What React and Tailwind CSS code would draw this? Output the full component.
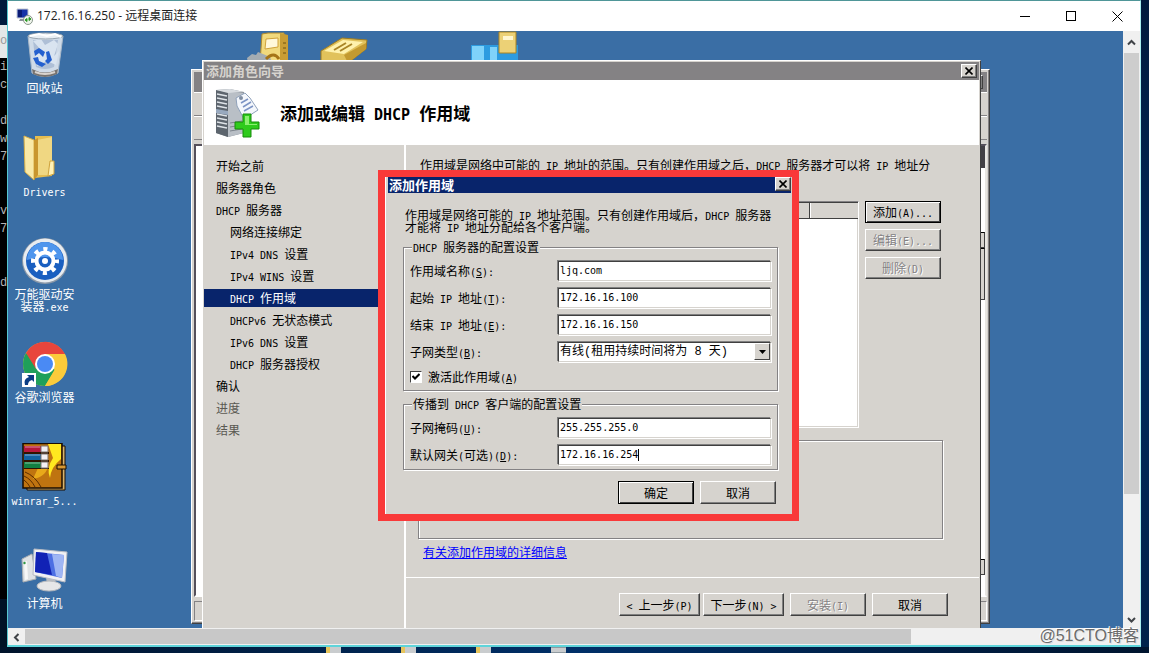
import React from 'react';

const NAV_ITEMS = [
  { label: '开始之前' },
  { label: '服务器角色' },
  { label: 'DHCP 服务器' },
  { label: '网络连接绑定', child: true },
  { label: 'IPv4 DNS 设置', child: true },
  { label: 'IPv4 WINS 设置', child: true },
  { label: 'DHCP 作用域', child: true, active: true },
  { label: 'DHCPv6 无状态模式', child: true },
  { label: 'IPv6 DNS 设置', child: true },
  { label: 'DHCP 服务器授权', child: true },
  { label: '确认' },
  { label: '进度', disabled: true },
  { label: '结果', disabled: true },
];

const TERMINAL_LINES = ['in', 'c:', '', 'dy', 'w.', '79', '', '', 'v.', '7.', '', '', 'dy'];

// Latin runs use a narrower monospace size so that two letters match one CJK cell.
// An "&" marks the access key, which is underlined.
const Txt = ({ text, latin = 'text-[10px]' }) => (
  <span className="whitespace-pre-wrap">
    {text.split(/([\x20-\x7e]+)/).map((part, i) => {
      if (!/^[\x20-\x7e]/.test(part)) return part;
      const at = part.indexOf('&');
      return (
        <span key={i} className={`font-['DejaVu_Sans_Mono',monospace] leading-[0] ${latin}`}>
          {at < 0 ? part : (
            <>
              {part.slice(0, at)}
              <u>{part[at + 1]}</u>
              {part.slice(at + 2)}
            </>
          )}
        </span>
      );
    })}
  </span>
);

const Button = ({ text, primary, disabled, className = 'w-[76px] h-[23px]' }) => (
  <button
    type="button"
    disabled={disabled}
    className={`${className} flex shrink-0 items-center justify-center border bg-[#d6d3ce] leading-3 ${
      primary
        ? 'border-black shadow-[inset_1px_1px_0_white,inset_-1px_-1px_0_#404040]'
        : 'border-t-white border-l-white border-r-[#404040] border-b-[#404040] shadow-[inset_-1px_-1px_0_#808080]'
    } ${disabled ? 'text-[#848284] [text-shadow:1px_1px_0_white]' : 'text-black'}`}
  >
    <Txt text={text} />
  </button>
);

const CloseButton = () => (
  <button
    type="button"
    aria-label="关闭"
    className="flex h-[14px] w-4 items-center justify-center border border-t-white border-l-white border-r-[#404040] border-b-[#404040] bg-[#d6d3ce] shadow-[inset_-1px_-1px_0_#808080]"
  >
    <svg width="8" height="8" viewBox="0 0 8 8" stroke="black" strokeWidth="1.6">
      <path d="M0.5 0.5L7.5 7.5M7.5 0.5L0.5 7.5" />
    </svg>
  </button>
);

const FIELD =
  'h-5 w-full border border-t-[#404040] border-l-[#404040] border-r-[#d6d3ce] border-b-[#d6d3ce] bg-white shadow-[-1px_-1px_0_#808080,1px_1px_0_white] outline-none';

const Row = ({ id, label, children }) => (
  <div className="flex h-5 items-center">
    <label htmlFor={id} className="w-[148px] shrink-0"><Txt text={label} /></label>
    <div className="relative flex-1">{children}</div>
  </div>
);

const TextField = ({ id, label, value, caret }) => (
  <Row id={id} label={label}>
    <input
      id={id}
      defaultValue={value}
      className={`${FIELD} block px-px pb-0.5 font-['DejaVu_Sans_Mono',monospace] text-[10px] leading-3`}
    />
    {caret && <span className="absolute top-1 left-20 h-3 w-px bg-black" />}
  </Row>
);

const Group = ({ legend, className, children }) => (
  <fieldset
    className={`${className} flex flex-col border border-[#848284] px-1.5 pt-2 shadow-[1px_1px_0_white,inset_1px_1px_0_white]`}
  >
    <legend className="ml-0.5 bg-[#d6d3ce] px-px leading-3"><Txt text={legend} /></legend>
    {children}
  </fieldset>
);

const RecycleBin = () => (
  <svg width="48" height="48" viewBox="0 0 48 48">
    <path d="M7 5L11 42Q24 49 37 42L42 5Z" fill="#cfdbe8" stroke="#a9b8c8" />
    <path d="M12 9L15 36Q24 40 33 36L37 9Z" fill="#aebfd6" />
    <path d="M12 10L20 8 24 14 33 9 37 13 33 25 38 20 35 34 26 30 16 35 13 22 20 19Z" fill="#d9e4f0" />
    <path d="M11 38Q24 45 37 38L36 43Q24 49 12 43Z" fill="#77736f" />
    <path d="M14 41Q24 45 34 41" stroke="#d9d4cf" strokeWidth="2" fill="none" />
    <ellipse cx="24.500" cy="5" rx="17.500" ry="3" fill="#e9eff4" stroke="#9aa6b0" />
    <path d="M9 5L18 3 26 5 34 3 40 6" stroke="#fff" strokeWidth="2" fill="none" />
    <g fill="#2460cf">
      <path d="M13 20L18 17 24 21 22 26 18 22 14 25Z" />
      <path d="M25 21L28 20 31 29 27 33 24 30 26 28Z" />
      <path d="M12 27L17 26 18 30 25 33 21 36 15 33Z" />
    </g>
  </svg>
);

const Folder = () => (
  <svg width="48" height="48" viewBox="0 0 48 48">
    <path d="M14 2H31V42L14 44Z" fill="#e5bd50" />
    <path d="M16 6L31 3V41L16 41Z" fill="#f0d782" />
    <path d="M3 2L13 6V46L4 38Z" fill="#f9e9a7" stroke="#d9b048" />
    <path d="M13 6L17 4V41L13 46Z" fill="#c9962e" />
    <path d="M29 27H33V40L27 42Z" fill="#fff1b6" stroke="#cfa23b" />
  </svg>
);

const GearDisc = () => (
  <svg width="48" height="48" viewBox="0 0 48 48">
    <circle cx="24" cy="24" r="23" fill="#8d99a8" />
    <circle cx="24" cy="23.500" r="22" fill="#e8ecf0" />
    <circle cx="24" cy="24" r="19" fill="#1a5fc0" />
    <path d="M6 23A18 18 0 0 1 42 23Q24 17 6 23Z" fill="#4f96ed" />
    <circle cx="24" cy="24" r="8.500" fill="none" stroke="white" strokeWidth="4" />
    <circle cx="24" cy="24" r="12" fill="none" stroke="white" strokeWidth="4" strokeDasharray="4.2 5.225" strokeDashoffset="2.1" />
    <circle cx="24" cy="24" r="3" fill="white" />
  </svg>
);

const Chrome = () => (
  <svg width="48" height="48" viewBox="0 0 48 48">
    <circle cx="24" cy="24" r="22" fill="#fbcb3b" />
    <path d="M24 24L5 13A22 22 0 0 0 24 46L34 30Z" fill="#1fa05a" />
    <path d="M24 14H44A22 22 0 0 0 5 13L15 29Z" fill="#e8453c" />
    <path d="M34 29L24 46A22 22 0 0 0 44 14H25Z" fill="#fbcb3b" />
    <circle cx="24" cy="24" r="10" fill="white" />
    <circle cx="24" cy="24" r="8" fill="#4a8af4" />
    <path d="M1 33H15V47H1Z" fill="white" />
    <path d="M4 45Q2 39 8 37L6 35H13V42L11 40Q7 41 7 45Z" fill="#0a3d84" />
  </svg>
);

const WinRar = () => (
  <svg width="48" height="48" viewBox="0 0 48 48">
    <path d="M5 3H44V47H6Z" fill="#d8b46c" stroke="#1a0c00" />
    <path d="M2 0.500H41V45H2Z" fill="#bf7410" stroke="#1a0c00" strokeWidth="1.500" />
    <path d="M27 1H40V16Q30 24 29 35Q25 25 32 15Z" fill="#ffe81f" />
    <path d="M28 20Q22 24 17 25L12 36Q26 34 28 20Z" fill="#e8a91a" />
    <path d="M3 33Q10 36 14 44M3 37Q7 40 9 44M4 29Q14 33 20 44" stroke="#5a2c00" fill="none" />
    <path d="M3 3H20V9H3Z" fill="#b5173c" />
    <path d="M3 11H20V17H3Z" fill="#1261a0" />
    <path d="M3 19H20V25H3Z" fill="#128042" />
    <path d="M3 9H28V11H3ZM3 17H28V19H3ZM3 25H28V26H3Z" fill="#301400" />
    <path d="M20 3H27V9H20ZM20 11H27V17H20ZM20 19H27V25H20Z" fill="#f4f0f4" stroke="#7d756e" />
    <path d="M4 4H19M4 12H19M4 20H19" stroke="#ffffff" strokeOpacity="0.500" />
    <path d="M36 22H45V26H36Z" fill="#d89832" stroke="#1a0c00" />
  </svg>
);

const Computer = () => (
  <svg width="48" height="48" viewBox="0 0 48 48">
    <path d="M1 13L11 8 15 33 2 36Z" fill="#dfe2e4" stroke="#a9aeb3" />
    <path d="M3 16L6 15 7 33 4 34Z" fill="#f7f7f7" />
    <circle cx="3.500" cy="17" r="1.200" fill="#2f9744" />
    <path d="M25 31L35 32 34 39H26Z" fill="#b9bec4" />
    <ellipse cx="28" cy="40" rx="12" ry="5" fill="#e6e7e8" stroke="#b5b8bc" />
    <path d="M13 3L46 6 44 36 12 29Z" fill="#f1f1f3" stroke="#b8bcc4" />
    <path d="M15 6L43 9 41 32 14 26Z" fill="#4d6fe3" />
    <path d="M15 6L26 7 31 29 14 26Z" fill="#1122b5" />
    <path d="M31 8L43 9 41 32 35 30Z" fill="#9fb6f4" />
  </svg>
);

const DESKTOP_ICONS = [
  { label: '回收站', icon: <RecycleBin /> },
  { label: 'Drivers', icon: <Folder /> },
  { label: '万能驱动安装器.exe', icon: <GearDisc /> },
  { label: '谷歌浏览器', icon: <Chrome /> },
  { label: 'winrar_5...', icon: <WinRar /> },
  { label: '计算机', icon: <Computer /> },
];

const ServerIcon = () => (
  <svg width="46" height="50" viewBox="0 0 46 50">
    <path d="M2 2L16 1 30 4V45L14 49 2 45Z" fill="#8c949c" />
    <path d="M2 2L14 4V49L2 45Z" fill="#5d656e" />
    <path d="M14 4L29 5V45L14 49Z" fill="#b9bfc6" />
    <path d="M2 2L16 1 30 4 14 5Z" fill="#d8dce0" />
    <path d="M3 6L13 8M3 10L13 12M3 14L13 16M3 18L13 20M3 26L13 28M3 30L13 32M3 34L13 36M3 38L13 40" stroke="#dfe4e9" strokeWidth="1.500" />
    <path d="M2 21L14 23V27L2 25Z" fill="#98a9bf" />
    <path d="M16 35L28 33M16 39L28 37M16 43L28 41" stroke="#7e858d" />
    <path d="M22 10L31 5 36 10 44 22 30 31 23 18Z" fill="#f4f7fc" stroke="#8fa1ba" />
    <path d="M27 15L34 11M29 19L37 14M30 23L39 18" stroke="#7c93c4" strokeWidth="1.500" />
    <circle cx="27" cy="10" r="2" fill="#7f8da1" />
    <path d="M29 26H37V34H45V41H37V49H29V41H21V34H29Z" fill="#2fcb1c" stroke="#168b0b" />
    <path d="M31 28H35V36H43V37H31Z" fill="#8bf070" />
  </svg>
);

const BackWindow = () => (
  <div className="absolute top-[38px] bottom-1 left-[183px] flex w-[799px] flex-col border border-t-white border-l-white border-r-[#404040] border-b-[#404040] bg-[#d6d3ce] p-0.5 shadow-[inset_-1px_-1px_0_#848284]">
    <div className="flex h-5 shrink-0 items-center justify-end bg-[#848284] pr-1"><CloseButton /></div>
    <div className="h-6 shrink-0 border-y border-t-white border-b-[#848284]" />
    <div className="h-6 shrink-0 border-y border-t-white border-b-[#848284]" />
    <div className="mt-1 flex flex-1 flex-col items-end border-2 border-[#55505a] border-r-[#e8e6e2] border-b-white bg-white">
      <div className="h-[22px] w-4 bg-[#424045]" />
      <div className="mt-16 h-4 w-4 border border-r-[#404040] border-b-[#404040] bg-[#d6d3ce]" />
      <div className="h-[52px] w-4 border border-r-[#404040] border-b-[#404040] bg-[#d6d3ce]" />
      <div className="flex-1" />
      <div className="mb-5 h-4 w-4 border border-r-[#404040] border-b-[#404040] bg-[#d6d3ce]" />
    </div>
    <div className="mt-1 h-5 shrink-0 border border-t-[#848284] border-l-[#848284] border-r-white border-b-white" />
  </div>
);

const ScopeDialog = () => (
  <form
    onSubmit={(e) => e.preventDefault()}
    className="absolute top-[139px] left-[370px] w-[421px] border-[7px] border-[#f93939] bg-[#d6d3ce]"
  >
    <div className="border-l border-white px-px">
      <div className="ml-px flex h-4 items-start justify-between bg-[#08246b] pl-px text-[13px] leading-4 font-bold text-white">
        <h2>添加作用域</h2>
        <CloseButton />
      </div>
      <div className="pr-[13px] pl-4">
        <p className="mt-4 px-0.5 leading-3">
          <Txt text="作用域是网络可能的 IP 地址范围。只有创建作用域后，DHCP 服务器" />
          <br />
          <Txt text="才能将 IP 地址分配给各个客户端。" />
        </p>
        <Group legend="DHCP 服务器的配置设置" className="mt-2 pb-1.5">
          <div className="flex flex-col gap-[7px]">
            <TextField id="name" label="作用域名称(&S):" value="ljq.com" />
            <TextField id="start" label="起始 IP 地址(&T):" value="172.16.16.100" />
            <TextField id="end" label="结束 IP 地址(&E):" value="172.16.16.150" />
            <Row id="subnet" label="子网类型(&B):">
              <select
                id="subnet"
                className={`${FIELD} block appearance-none px-px font-['Liberation_Mono','Noto_Sans_CJK_SC',monospace] text-xs leading-4`}
              >
                <option>有线(租用持续时间将为 8 天)</option>
              </select>
              <span className="pointer-events-none absolute top-px right-px flex h-[17px] w-4 items-center justify-center border border-t-white border-l-white border-r-[#404040] border-b-[#404040] bg-[#d6d3ce]">
                <svg width="7" height="4" viewBox="0 0 7 4"><path d="M0 0H7L3.500 4Z" fill="black" /></svg>
              </span>
            </Row>
          </div>
          <label className="mt-2 flex h-[14px] items-center gap-1.5">
            <input type="checkbox" defaultChecked className="peer sr-only" />
            <span className="flex h-3 w-3 items-center justify-center border border-t-[#404040] border-l-[#404040] border-r-white border-b-white bg-white [&>svg]:invisible peer-checked:[&>svg]:visible">
              <svg width="8" height="8" viewBox="0 0 8 8" fill="none" stroke="black" strokeWidth="2">
                <path d="M0.500 3L3 5.500L7.500 1" />
              </svg>
            </span>
            <Txt text="激活此作用域(&A)" />
          </label>
        </Group>
        <Group legend="传播到 DHCP 客户端的配置设置" className="mt-[7px] pb-1">
          <div className="flex flex-col gap-[7px]">
            <TextField id="mask" label="子网掩码(&U):" value="255.255.255.0" />
            <TextField id="gateway" label="默认网关(可选)(&D):" value="172.16.16.254" caret />
          </div>
        </Group>
        <div className="mt-[11px] flex justify-end gap-1.5 pr-0.5 pb-2.5">
          <Button text="确定" primary />
          <Button text="取消" />
        </div>
      </div>
    </div>
  </form>
);

const Wizard = () => (
  <div className="absolute top-[29px] bottom-0 left-[194px] flex w-[779px] flex-col border-x border-t border-t-white border-l-white border-r-[#404040] bg-[#d6d3ce] px-px pt-px">
    <div className="flex h-[18px] shrink-0 items-center justify-between bg-[#848284] pr-0.5 pl-0.5 text-[13px] leading-4 font-bold text-[#d6d3ce]">
      <h1>添加角色向导</h1>
      <CloseButton />
    </div>
    <div className="flex h-[65px] shrink-0 items-center gap-5 bg-white pl-2.5">
      <ServerIcon />
      <h2 className="text-[17px] leading-6 font-bold">
        <Txt text="添加或编辑 DHCP 作用域" latin="text-[15px]" />
      </h2>
    </div>
    <div className="flex min-h-0 flex-1">
      <nav className="w-[202px] shrink-0 border-r-2 border-white pt-3">
        <ul className="flex flex-col gap-1">
          {NAV_ITEMS.map(({ label, child, active, disabled }) => (
            <li
              key={label}
              className={`h-[18px] leading-[18px] ${child ? 'pl-[26px]' : 'pl-3'} ${
                active ? 'bg-[#08246b] text-white' : disabled ? 'text-[#5a5952]' : 'text-black'
              }`}
            >
              <Txt text={label} />
            </li>
          ))}
        </ul>
      </nav>
      <main className="flex flex-1 flex-col">
        <div className="flex flex-1 flex-col pt-3.5 pr-9 pl-3">
          <p className="pl-0.5 leading-3">
            <Txt text="作用域是网络中可能的 IP 地址的范围。只有创建作用域之后，DHCP 服务器才可以将 IP 地址分" />
          </p>
          <div className="mt-[30px] flex gap-1.5">
            <div className="h-[227px] flex-1 border border-t-[#848284] border-l-[#848284] border-r-white border-b-white bg-white shadow-[inset_-1px_-1px_0_#d6d3ce]">
              <div className="flex h-[17px] border-t border-b border-[#404040] bg-[#d6d3ce]">
                <div className="flex-1 border-r border-[#404040]" />
                <div className="w-12 border-l border-white" />
              </div>
            </div>
            <div className="mr-0.5 flex flex-col gap-1.5">
              <Button text="添加(A)..." primary className="h-[22px] w-[76px]" />
              <Button text="编辑(E)..." disabled className="h-[22px] w-[76px]" />
              <Button text="删除(D)" disabled className="h-[22px] w-[76px]" />
            </div>
          </div>
          <div className="mt-3 flex-1 border border-[#848284] shadow-[1px_1px_0_white,inset_1px_1px_0_white]" />
          <a href="#more" className="mt-[7px] mb-[19px] ml-[5px] self-start leading-3 text-[#0000ff] underline">
            有关添加作用域的详细信息
          </a>
        </div>
        <div className="flex h-[51px] shrink-0 justify-end border-t border-white pt-[15px] pr-[31px]">
          <Button text="< 上一步(P)" className="mr-[3px] h-[23px] w-[81px]" />
          <Button text="下一步(N) >" className="mr-1.5 h-[23px] w-[81px]" />
          <Button text="安装(I)" disabled className="mr-1.5 h-[23px] w-[76px]" />
          <Button text="取消" />
        </div>
      </main>
    </div>
  </div>
);

const Desktop = () => (
  <div className="relative min-w-0 flex-1 overflow-hidden bg-[#3a6ea5]">
    <ul className="w-[73px] text-white">
      {DESKTOP_ICONS.map(({ label, icon }) => (
        <li key={label} className="flex h-[103px] flex-col items-center gap-[3px] text-center">
          {icon}
          <span className="w-[69px] leading-3 break-all"><Txt text={label} /></span>
        </li>
      ))}
    </ul>
    <svg className="absolute top-0 left-[238px]" width="48" height="32" viewBox="0 0 48 32">
      <path d="M16 3L22 2H38V32H14Z" fill="#f1d97c" stroke="#b08a2c" />
      <path d="M34 2L42 4V32H34Z" fill="#c99d35" />
      <path d="M20 8L32 7V16L19 18Z" fill="#fff8da" stroke="#cfa23b" />
      <path d="M37 12H40M37 17H40M37 22H40" stroke="#6e5212" />
      <path d="M1 27L6 23 10 24 12 21 17 23 24 26 26 32H2Z" fill="#a4acb2" />
      <path d="M20 28Q28 20 33 28" stroke="#a57416" strokeWidth="3" fill="none" />
    </svg>
    <svg className="absolute top-1.5 left-[312px]" width="50" height="26" viewBox="0 0 50 26">
      <path d="M1 14L22 1 47 3 46 12 28 26H1Z" fill="#e1c25b" stroke="#9d7b22" />
      <path d="M4 14L23 3 43 5 24 17Z" fill="#fff2ad" />
      <path d="M14 13L26 6M20 14L32 7" stroke="#a98527" strokeWidth="2" />
      <path d="M24 18L46 6V12L28 26Z" fill="#c39a30" />
    </svg>
    <svg className="absolute top-0 left-[462px]" width="50" height="32" viewBox="0 0 50 32">
      <path d="M1 14H48V32H1Z" fill="#2d9be0" />
      <path d="M2 15H14V32H2ZM20 16H27V32H20Z" fill="#7fd2fa" />
      <path d="M29 1H46V22H29Z" fill="#ecd176" stroke="#ad8421" />
      <path d="M33 5H43V9H33Z" fill="#fff6cf" />
    </svg>
    <BackWindow />
    <Wizard />
    <ScopeDialog />
  </div>
);

const Arrow = ({ d }) => (
  <svg width="9" height="9" viewBox="0 0 9 9" fill="none" stroke="#404448" strokeWidth="2"><path d={d} /></svg>
);

const RemoteWindow = () => (
  <section className="flex min-w-0 flex-1 flex-col border border-t-[#4f9698] border-r-[#a8f0f0] border-b-2 border-l-[#57c7d0] border-b-[#5ed4da] bg-white">
    <header className="flex h-[30px] shrink-0 items-center pl-2">
      <svg width="17" height="17" viewBox="0 0 17 17">
        <path d="M1 1H12V10H1Z" fill="#1733a8" stroke="#c4c9ce" />
        <path d="M2 2H6V9H2Z" fill="#0b1b74" />
        <path d="M4 11H9V13H3Z" fill="#8c9299" />
        <circle cx="12" cy="12" r="4.500" fill="#eef3ea" stroke="#8a978c" />
        <path d="M9 12L11 10.500V13.500ZM15 11L13 9.500V12.500Z" fill="#2c9a25" stroke="#2c9a25" />
      </svg>
      <h1 className="ml-1 flex-1 font-['Open_Sans','Noto_Sans_CJK_SC',sans-serif] text-xs text-[#222]">
        172.16.16.250 - 远程桌面连接
      </h1>
      <div className="flex">
        <button type="button" aria-label="最小化" className="flex h-[29px] w-[46px] items-center justify-center">
          <span className="h-px w-2.5 bg-black" />
        </button>
        <button type="button" aria-label="最大化" className="flex h-[29px] w-[46px] items-center justify-center">
          <span className="h-2.5 w-2.5 border border-black" />
        </button>
        <button type="button" aria-label="关闭" className="flex h-[29px] w-[46px] items-center justify-center">
          <svg width="11" height="11" viewBox="0 0 11 11" stroke="black"><path d="M0.500 0.500L10.500 10.500M10.500 0.500L0.500 10.500" /></svg>
        </button>
      </div>
    </header>
    <div className="flex min-h-0 flex-1">
      <Desktop />
      <div className="flex w-[17px] shrink-0 flex-col bg-[#f0f0f0]">
        <div className="flex h-[22px] items-center justify-center"><Arrow d="M1 6.500L4.500 3L8 6.500" /></div>
        <div className="flex-1 px-px"><div className="h-[79%] bg-[#cdcdcd]" /></div>
        <div className="flex h-[17px] items-center justify-center"><Arrow d="M1 3L4.500 6.500L8 3" /></div>
      </div>
    </div>
    <div className="flex h-[17px] shrink-0 bg-[#f0f0f0] pt-px">
      <div className="flex w-[17px] items-center justify-center"><Arrow d="M6.500 1L3 4.500L6.500 8" /></div>
      <div className="mr-[34px] flex-1"><div className="h-[15px] w-[82%] bg-[#c8c8c8]" /></div>
    </div>
  </section>
);

export default function App() {
  return (
    <div className="relative flex h-screen flex-col overflow-hidden bg-[#001a3d] font-['Noto_Sans_CJK_SC',sans-serif] text-xs">
      <div className="flex min-h-0 flex-1">
        <div className="flex w-[7px] shrink-0 flex-col overflow-hidden bg-black font-['Liberation_Mono',monospace] text-[#b4b4b4]">
          <div className="h-[25px] bg-[#001a3d]" />
          <div className="h-[33px] bg-[#e4e8e8] pt-2 text-[#999]">oc</div>
          {TERMINAL_LINES.map((line, i) => (
            <div key={i} className="h-[18px] shrink-0 leading-[18px]">{line}</div>
          ))}
          <div className="flex-1" />
          <div className="h-12 bg-[#001226]" />
        </div>
        <RemoteWindow />
        <div className="w-2 shrink-0 bg-linear-to-b from-[#001a3d] via-[#002b5c] to-[#00224b]" />
      </div>
      <div className="flex h-1.5 shrink-0 gap-[60px] bg-linear-to-r from-[#00132b] via-[#002f68] to-[#00142e] pl-[326px]">
        <div className="w-[15px] border-l-4 border-[#e6c45c] bg-[#c9ccce]" />
        <div className="w-[15px] border-l-4 border-[#e6c45c] bg-[#c9ccce]" />
        <div className="w-[15px] border-l-4 border-[#e6c45c] bg-[#c9ccce]" />
        <div className="w-[15px] border-y border-[#8f9aa0] bg-[#c9ccce]" />
      </div>
      <div className="absolute right-2.5 bottom-2 font-['Liberation_Sans','Noto_Sans_CJK_SC',sans-serif] text-base leading-[18px] text-[#6b6b6b] [text-shadow:-1px_-1px_0_white,1px_1px_0_#ddd]">
        @51CTO博客
      </div>
    </div>
  );
}
